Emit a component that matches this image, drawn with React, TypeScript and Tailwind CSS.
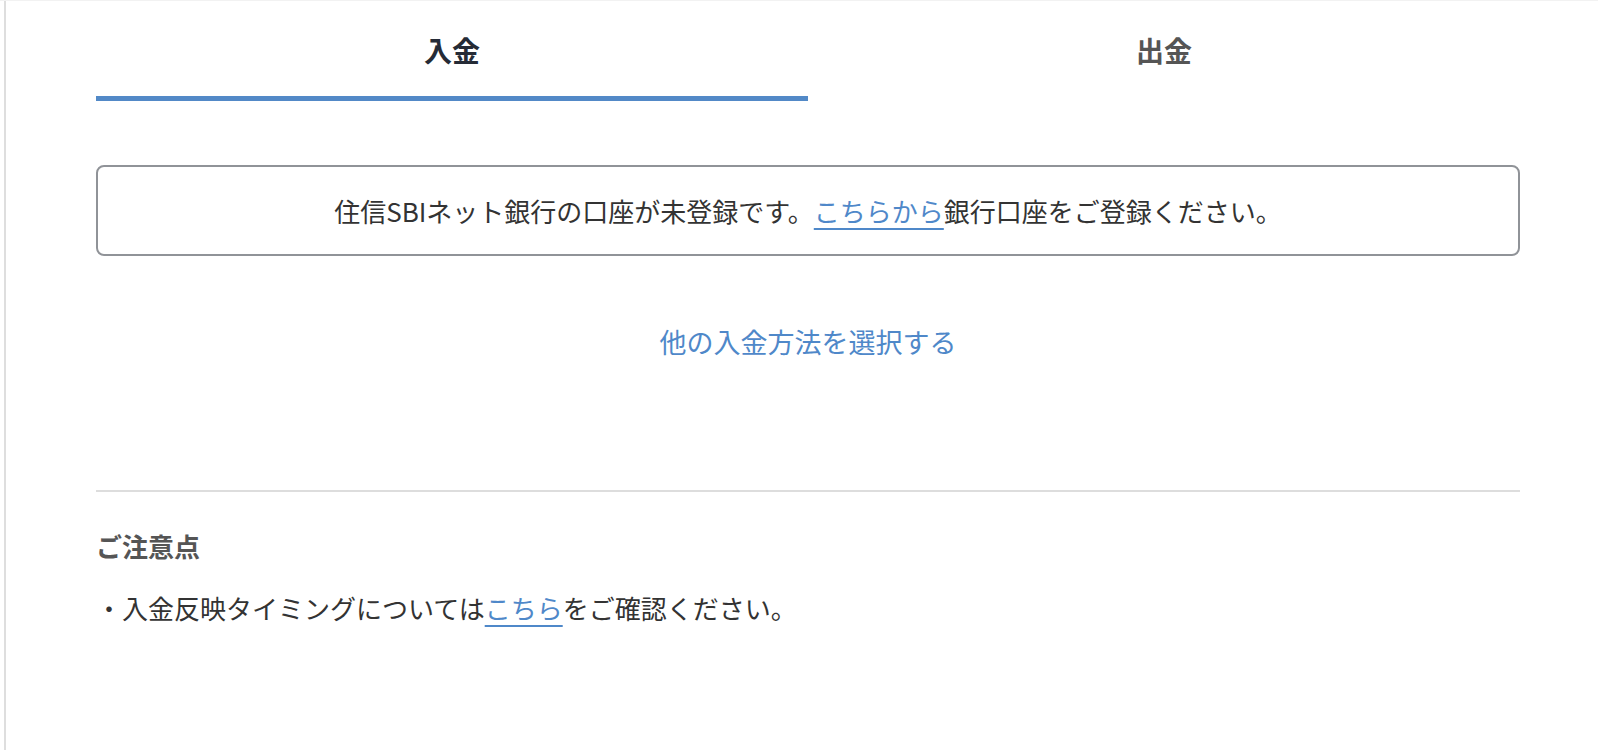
import React, { useState } from "react";

const tabs = ["入金", "出金"];

const App = () => {
  const [active, setActive] = useState(0);

  return (
    <div
      className="w-full h-[750px] flex bg-white border-t border-[#f2f2f2]"
      style={{ fontFamily: '"Noto Sans CJK JP", "Noto Sans", sans-serif' }}
    >
      <div className="w-[4px] shrink-0" />
      <main className="flex-1 border-l-2 border-[#dedede] pl-[90px] pr-[78px]">
        <div className="w-[1424px]">
          <div className="flex">
            {tabs.map((tab, i) => (
              <button
                key={tab}
                onClick={() => setActive(i)}
                className={
                  i === active
                    ? "flex-1 pt-[29px] pb-[26px] leading-[40px] text-[28px] font-bold text-[#252b36] border-b-[5px] border-[#5289c7]"
                    : "flex-1 pt-[29px] pb-[26px] leading-[40px] text-[28px] font-bold text-[#555555] border-b-[5px] border-transparent"
                }
              >
                {tab}
              </button>
            ))}
          </div>

          <div className="mt-[64px] border-2 border-[#909398] rounded-[8px] py-[24px] text-center text-[26px] leading-[39px] text-[#333333]">
            住信SBIネット銀行の口座が未登録です。
            <a href="#" className="text-[#4f88c9] underline underline-offset-[6px] decoration-2">
              こちらから
            </a>
            銀行口座をご登録ください。
          </div>

          <div className="mt-[66px] text-center">
            <a href="#" className="text-[27px] leading-[39px] text-[#4f88c9]">
              他の入金方法を選択する
            </a>
          </div>

          <div className="mt-[129px] h-[2px] bg-[#dddddd]" />

          <h3 className="mt-[34px] text-[26px] leading-[39px] font-bold text-[#555555]">
            ご注意点
          </h3>
          <p className="mt-[23px] text-[26px] leading-[39px] text-[#333333]">
            ・入金反映タイミングについては
            <a href="#" className="text-[#4f88c9] underline underline-offset-[6px] decoration-2">
              こちら
            </a>
            をご確認ください。
          </p>
        </div>
      </main>
    </div>
  );
};

export default App;
